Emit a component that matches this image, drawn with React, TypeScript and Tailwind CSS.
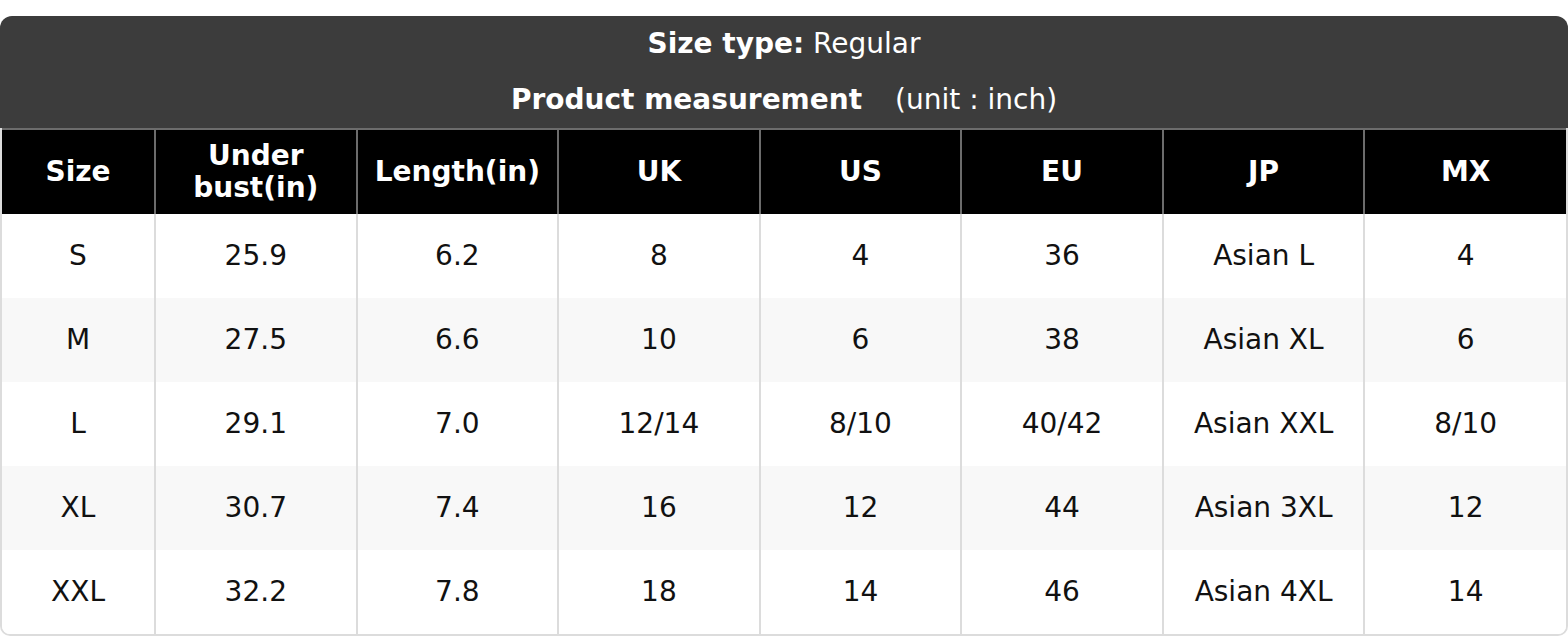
import React from 'react';

interface SizeRow {
    size: string;
    underBust: string;
    length: string;
    uk: string;
    us: string;
    eu: string;
    jp: string;
    mx: string;
}

const rows: SizeRow[] = [
    { size: 'S', underBust: '25.9', length: '6.2', uk: '8', us: '4', eu: '36', jp: 'Asian L', mx: '4' },
    { size: 'M', underBust: '27.5', length: '6.6', uk: '10', us: '6', eu: '38', jp: 'Asian XL', mx: '6' },
    { size: 'L', underBust: '29.1', length: '7.0', uk: '12/14', us: '8/10', eu: '40/42', jp: 'Asian XXL', mx: '8/10' },
    { size: 'XL', underBust: '30.7', length: '7.4', uk: '16', us: '12', eu: '44', jp: 'Asian 3XL', mx: '12' },
    { size: 'XXL', underBust: '32.2', length: '7.8', uk: '18', us: '14', eu: '46', jp: 'Asian 4XL', mx: '14' },
];

const headers = ['Size', 'Under bust(in)', 'Length(in)', 'UK', 'US', 'EU', 'JP', 'MX'];

export default function App() {
    return (
        <div className="min-h-[636px] bg-white pt-4 font-['DejaVu_Sans',sans-serif] text-[28px]">
            <div className="rounded-t-[12px] bg-[#3c3c3c] text-center text-white">
                <div className="leading-[56px]">
                    <span className="font-bold">Size type:</span> Regular
                </div>
                <div className="leading-[56px]">
                    <span className="font-bold">Product measurement</span>
                    <span className="ml-[33px]">(unit : inch)</span>
                </div>
            </div>

            <div className="overflow-hidden rounded-b-[10px] border-2 border-t-0 border-[#dcdcdc]">
                <table className="w-full table-fixed border-collapse text-center">
                    <colgroup>
                        <col className="w-[153px]" />
                        <col />
                        <col />
                        <col />
                        <col />
                        <col />
                        <col />
                        <col />
                    </colgroup>
                    <thead>
                        <tr className="h-[85px] border-t-2 border-[#6c6c6c] bg-black text-white">
                            {headers.map((h, i) => (
                                <th
                                    key={h}
                                    className={`px-2 font-bold leading-[32px] ${i > 0 ? 'border-l-2 border-[#6c6c6c]' : ''}`}
                                >
                                    {h === 'Under bust(in)' ? (
                                        <>
                                            Under
                                            <br />
                                            bust(in)
                                        </>
                                    ) : (
                                        h
                                    )}
                                </th>
                            ))}
                        </tr>
                    </thead>
                    <tbody className="text-[#111]">
                        {rows.map((r, idx) => (
                            <tr key={r.size} className={`h-[84px] ${idx % 2 === 1 ? 'bg-[#f8f8f8]' : 'bg-white'}`}>
                                {[r.size, r.underBust, r.length, r.uk, r.us, r.eu, r.jp, r.mx].map((v, i) => (
                                    <td key={i} className={i > 0 ? 'border-l-2 border-[#dcdcdc]' : ''}>
                                        {v}
                                    </td>
                                ))}
                            </tr>
                        ))}
                    </tbody>
                </table>
            </div>
        </div>
    );
}
